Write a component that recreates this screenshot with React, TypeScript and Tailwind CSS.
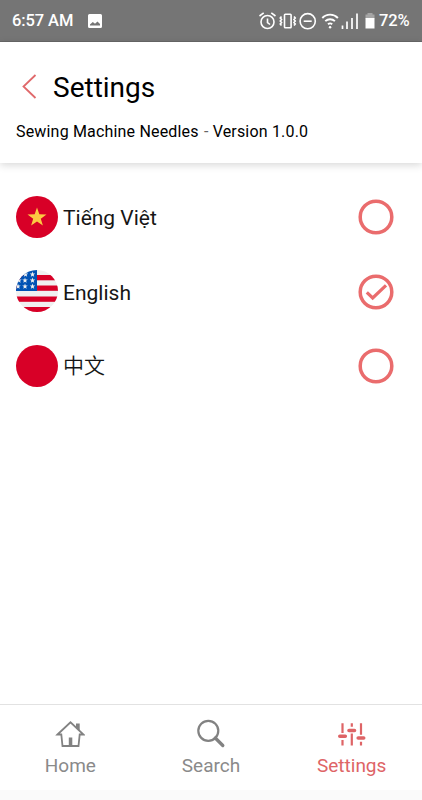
import React, { useState } from 'react';

type LanguageId = 'vi' | 'en' | 'zh';

interface Language {
  id: LanguageId;
  label: string;
}

const languages: Language[] = [
  { id: 'vi', label: 'Tiếng Việt' },
  { id: 'en', label: 'English' },
  { id: 'zh', label: '中文' }
];

const STAR = '0,-1 0.235,-0.324 0.951,-0.309 0.38,0.124 0.588,0.809 0,0.4 -0.588,0.809 -0.38,0.124 -0.951,-0.309 -0.235,-0.324';

const Flag: React.FC<{ id: LanguageId }> = ({ id }) => (
  <svg viewBox="0 0 42 42" className="w-[42px] h-[42px] shrink-0 rounded-full">
    {id === 'en' ? (
      <>
        <rect width="42" height="42" fill="#f0f0f0" />
        {[5, 15.5, 26.5, 37].map((y) => (
          <rect key={y} y={y} width="42" height="5.3" fill="#d80027" />
        ))}
        <rect width="21" height="21" fill="#0052b4" />
        {[
          [16.5, 4.5], [9.5, 4.5],
          [16.5, 10.5], [9, 10.5], [3, 10.5],
          [16.5, 16.5], [9, 16.5], [2, 16.5]
        ].map(([x, y]) => (
          <polygon
            key={`${x}-${y}`}
            points={STAR}
            fill="#f0f0f0"
            transform={`translate(${x} ${y}) scale(2.9)`}
          />
        ))}
      </>
    ) : (
      <rect width="42" height="42" fill="#d80027" />
    )}
    {id === 'vi' && (
      <polygon points={STAR} fill="#ffda44" fillOpacity="0.92" transform="translate(21 21.5) scale(10)" />
    )}
  </svg>
);

const Radio: React.FC<{ checked: boolean }> = ({ checked }) => (
  <svg viewBox="0 0 36 36" className="mt-px w-9 h-9 shrink-0" fill="none" stroke="#ea6c6d" strokeWidth="3.5">
    <circle cx="18" cy="18" r="15.8" />
    {checked && <path d="M8.8 18.3l5.9 5.7L28 11.3" strokeWidth="3.2" />}
  </svg>
);

const StatusBar: React.FC = () => (
  <div className="h-[42px] shrink-0 flex items-center bg-[#757575] border-b border-[#686868] text-white font-medium text-[16.5px] pt-0.5 pl-3 pr-[11px]">
    <span className="w-[62px] whitespace-nowrap tracking-[-0.1px]">6:57 AM</span>
    <svg viewBox="0 0 14 14" className="ml-[14px] mb-0.5 w-[14px] h-[14px]">
      <path
        fill="white"
        fillRule="evenodd"
        d="M1.5 0h11A1.5 1.5 0 0 1 14 1.5v11a1.5 1.5 0 0 1-1.5 1.5h-11A1.5 1.5 0 0 1 0 12.5v-11A1.5 1.5 0 0 1 1.5 0zM2 11.500h10V10L9.500 7.500 7 9.700 4.800 8 2 10.500z"
      />
    </svg>

    {/* Alarm, vibrate, do not disturb, wifi, signal, battery */}
    <svg
      viewBox="0 0 118 20"
      className="ml-auto mb-px w-[118px] h-5"
      fill="none"
      stroke="white"
      strokeWidth="1.6"
    >
      <circle cx="8.5" cy="11" r="6.5" />
      <path d="M8.5 7.5v4l2.500 2M0.500 5L4.700 1.800M12.300 1.800l4.200 3.200" />

      <rect x="25.500" y="3.200" width="6.600" height="13.600" rx="0.800" />
      <path d="M22.500 5.500l-1.200 1.500 1.200 1.500-1.200 1.500 1.200 1.500-1.200 1.500 1.200 1.500M35 5.500l1.200 1.500-1.200 1.500 1.200 1.500-1.200 1.500 1.200 1.500-1.200 1.500" strokeWidth="1.700" />

      <circle cx="48.700" cy="10.200" r="7.600" />
      <path d="M44.700 10.200h8" />

      <path d="M63.300 7a10.700 10.700 0 0 1 15.600 0M66.300 10.200a6.800 6.800 0 0 1 9.600 0M69 13.300a3.200 3.200 0 0 1 4.200 0" strokeWidth="1.900" />
      <circle cx="71.100" cy="16.300" r="1.200" fill="white" stroke="none" />

      <path d="M83.500 14.500V18M88 10.500v7.500M93 7v11M98 2.500V18" strokeWidth="1.700" />

      <path d="M106.500 3.500h2V2h5v1.500h2V7.500h-9z" fill="#a5a5a5" stroke="none" />
      <path d="M106.500 7h9v10.500h-9z" fill="white" stroke="none" />
    </svg>
    <span className="ml-[2px] w-[32px] whitespace-nowrap tracking-[-0.1px]">72%</span>
  </div>
);

const Header: React.FC = () => (
  <header className="h-[121px] shrink-0 bg-white shadow-[0_2px_8px_rgba(0,0,0,0.16)] pt-[27px]">
    <div className="flex items-center h-9 pl-[22px]">
      <button aria-label="Back" className="w-[31px]">
        <svg viewBox="0 0 15 26" className="w-[15px] h-[26px]" fill="none" stroke="#e0696b" strokeWidth="1.8">
          <path d="M13.5 1l-12 11.500 12 11.500" />
        </svg>
      </button>
      <h1 className="pt-0.5 text-[28px] leading-9 text-black">Settings</h1>
    </div>
    <p className="mt-[17px] pl-4 text-[16px] leading-5 tracking-[0.18px] text-black whitespace-nowrap">
      Sewing Machine Needles <span className="ml-px text-[#666]">-</span> Version 1.0.0
    </p>
  </header>
);

const HomeIcon: React.FC = () => (
  <svg viewBox="0 0 30 30" className="w-[30px] h-[30px]" fill="none" stroke="#828282" strokeWidth="1.8">
    <path d="M2.500 15.500L15.500 3.300l13 12.200h-3.800L23.500 27h-16L6.300 15.500z" />
    <path d="M21 4.500h3.700v7.500L21 8.600zM13.800 18.500h3.500v8.500h-3.500z" fill="#828282" stroke="none" />
  </svg>
);

const SearchIcon: React.FC = () => (
  <svg viewBox="0 0 30 30" className="w-[30px] h-[30px]" fill="none" stroke="#828282">
    <circle cx="12.300" cy="11.800" r="10" strokeWidth="2.200" />
    <path d="M19.300 19l7.500 7.500" strokeWidth="3.300" strokeLinecap="round" />
  </svg>
);

const SlidersIcon: React.FC = () => (
  <svg viewBox="0 0 30 30" className="w-[30px] h-[30px]" fill="none" stroke="#de6466">
    <path d="M5.500 4.300v9.700M5.500 21v5.500M14.800 4.300v3.500M14.800 14.500v12M24 4.300v11.500M24 22.700v3.800" strokeWidth="2.200" />
    <path d="M2.800 17.300h5.500M12 11.500h5.500M21.200 19h5.500" strokeWidth="3.600" strokeLinecap="round" />
  </svg>
);

const navigationItems = [
  { id: 'home', label: 'Home', icon: <HomeIcon /> },
  { id: 'search', label: 'Search', icon: <SearchIcon /> },
  { id: 'settings', label: 'Settings', icon: <SlidersIcon /> }
];

const App: React.FC = () => {
  const [selected, setSelected] = useState<LanguageId>('en');
  const [activeTab, setActiveTab] = useState('settings');

  return (
    <div className="w-full h-screen flex flex-col bg-white overflow-hidden font-['Roboto','Noto_Sans_CJK_SC',sans-serif]">
      <StatusBar />
      <Header />

      <main className="flex-1 pt-[16.5px]">
        {languages.map((language) => (
          <button
            key={language.id}
            onClick={() => setSelected(language.id)}
            className="w-full h-[74.5px] flex items-center pl-4 pr-7 text-left"
          >
            <Flag id={language.id} />
            <span
              className={`flex-1 ml-[5px] text-[21px] leading-8 text-[#161616] ${
                language.id === 'zh' ? 'font-[350] pt-px' : 'pt-[3px]'
              }`}
            >
              {language.label}
            </span>
            <Radio checked={selected === language.id} />
          </button>
        ))}
      </main>

      <nav className="h-[86px] shrink-0 grid grid-cols-3 border-t border-[#e2e2e2]">
        {navigationItems.map((item) => (
          <button
            key={item.id}
            onClick={() => setActiveTab(item.id)}
            className={`flex flex-col items-center pt-[14px] text-[19px] leading-6 ${
              activeTab === item.id ? 'text-[#de6466]' : 'text-[#8a8a8a]'
            }`}
          >
            {item.icon}
            <span className="mt-[5px]">{item.label}</span>
          </button>
        ))}
      </nav>
      <div className="h-2.5 shrink-0 bg-[#fafafa]" />
    </div>
  );
};

export default App;
